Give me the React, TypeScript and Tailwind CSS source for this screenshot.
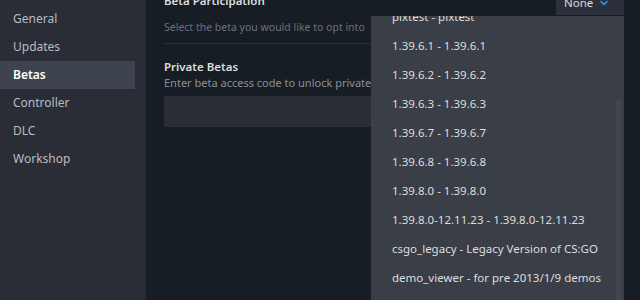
import { ChevronDown } from "lucide-react";

const tabs = ["General", "Updates", "Betas", "Controller", "DLC", "Workshop"];

const betas = [
  "pixtest - pixtest",
  "1.39.6.1 - 1.39.6.1",
  "1.39.6.2 - 1.39.6.2",
  "1.39.6.3 - 1.39.6.3",
  "1.39.6.7 - 1.39.6.7",
  "1.39.6.8 - 1.39.6.8",
  "1.39.8.0 - 1.39.8.0",
  "1.39.8.0-12.11.23 - 1.39.8.0-12.11.23",
  "csgo_legacy - Legacy Version of CS:GO",
  "demo_viewer - for pre 2013/1/9 demos",
];

export default function App() {
  return (
    <div className="flex h-[300px] w-[640px] overflow-hidden bg-[#171d25] font-['Noto_Sans',sans-serif] text-[11.5px]">
      {/* Sidebar */}
      <div className="flex w-[146px] shrink-0 flex-col border-r border-[#252830] bg-[#2a2d36] pt-[5px] pr-[10px] text-[12px]">
        {tabs.map((tab) => (
          <div
            key={tab}
            className={`flex h-[28px] items-center pl-[13px] ${
              tab === "Betas"
                ? "bg-[#3d4450] font-semibold text-white"
                : "text-[#b8bcc2]"
            }`}
          >
            {tab}
          </div>
        ))}
      </div>

      {/* Main */}
      <div className="relative flex-1 pl-[18px] pr-[16px]">
        <div className="-mt-[9px] flex items-start justify-between">
          <div className="pt-[1px] font-semibold text-[#dcdedf]">Beta Participation</div>
          <div className="flex h-[24px] w-[68px] items-center gap-[5px] bg-[#2b303a] pl-[8px] text-[#dcdedf]">
            <span>None</span>
            <ChevronDown size={12} strokeWidth={3} className="text-[#1a9fff]" />
          </div>
        </div>
        <div className="mt-[5px] text-[10.5px] text-[#6c7179]">Select the beta you would like to opt into</div>
        <div className="mt-[7px] h-px bg-[#2a2f38]" />
        <div className="mt-[14px] font-semibold text-[#dcdedf]">Private Betas</div>
        <div className="text-[11px] text-[#8a8f97]">Enter beta access code to unlock private betas</div>
        <div className="mt-[4px] h-[31px] bg-[#2a2d35]" />

        {/* Dropdown menu */}
        <div className="absolute left-[225px] top-[16px] h-[284px] w-[253px] overflow-hidden bg-[#3a3e46]">
          <div className="-mt-[14px] pl-[21px] text-[#dcdedf]">
            {betas.map((b) => (
              <div key={b} className="flex h-[29px] items-center">
                {b}
              </div>
            ))}
          </div>
          <div className="absolute right-[3px] top-[84px] h-[220px] w-[5px] bg-[#42464e]" />
        </div>
      </div>
    </div>
  );
}
